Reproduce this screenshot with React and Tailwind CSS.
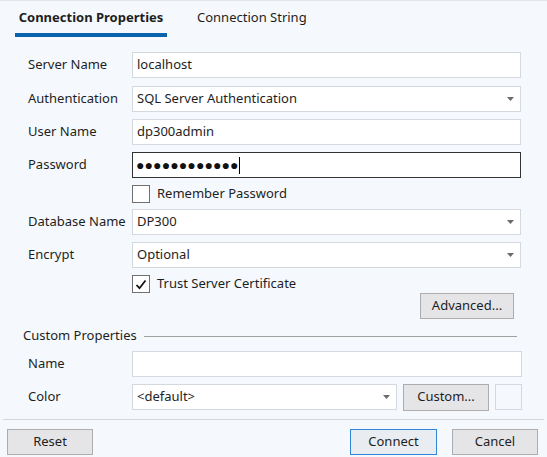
import React from 'react';

const font = { fontFamily: '"Segoe UI", "Noto Sans", "Open Sans", sans-serif' };

function Arrow() {
  return (
    <svg width="7" height="4" viewBox="0 0 7 4" className="shrink-0">
      <path d="M0 0h7L3.5 4z" fill="#6b6b6b" />
    </svg>
  );
}

function Field({ label, children }) {
  return (
    <div className="flex items-center h-[26px]">
      <div className="w-[104px] shrink-0 text-[13px] text-[#1e1e1e]">{label}</div>
      {children}
    </div>
  );
}

function TextBox({ value }) {
  return (
    <div className="flex-1 h-full bg-white border border-[#d4d9e0] px-[4px] flex items-center text-[13px] text-[#1e1e1e]">
      {value}
    </div>
  );
}

function DropDown({ value, className = 'flex-1' }) {
  return (
    <div className={`${className} h-full bg-white border border-[#d4d9e0] pl-[4px] pr-[6px] flex items-center justify-between text-[13px] text-[#1e1e1e]`}>
      <span>{value}</span>
      <Arrow />
    </div>
  );
}

function CheckRow({ checked, label }) {
  return (
    <div className="flex items-center h-[18px] pl-[104px] gap-[7px]">
      <div className="w-[18px] h-[18px] bg-white border border-[#707070] flex items-center justify-center">
        {checked && (
          <svg width="12" height="11" viewBox="0 0 12 11">
            <path d="M1.5 6 L4.5 9.2 L10.5 1.5" fill="none" stroke="#111" strokeWidth="1.8" />
          </svg>
        )}
      </div>
      <span className="text-[13px] text-[#1e1e1e]">{label}</span>
    </div>
  );
}

function Btn({ children, className = '', primary }) {
  return (
    <div
      className={`h-[26px] flex items-center justify-center text-[13px] text-[#1e1e1e] border ${
        primary ? 'border-[#2f86d6] bg-[#e9edf2]' : 'border-[#adadad] bg-[#e5e5e8]'
      } ${className}`}
    >
      {children}
    </div>
  );
}

export default function App() {
  return (
    <div className="w-[547px] h-[457px] bg-[#f5f9fd] border-t border-[#e2e6ea] flex flex-col overflow-hidden" style={font}>
      {/* tabs */}
      <div className="flex items-end pl-[15px] h-[36px]">
        <div className="w-[152px] h-full flex flex-col items-center justify-end">
          <span className="text-[13px] font-bold text-[#1e1e1e] leading-none mb-[9px]">Connection Properties</span>
          <div className="w-full h-[4px] bg-[#0a64ad]" />
        </div>
        <div className="ml-[30px] h-full flex items-end pb-[13px]">
          <span className="text-[13px] text-[#1e1e1e] leading-none">Connection String</span>
        </div>
      </div>

      {/* form */}
      <div className="flex flex-col pl-[28px] pr-[26px] mt-[15px]">
        <Field label="Server Name"><TextBox value="localhost" /></Field>
        <div className="h-[8px]" />
        <Field label="Authentication"><DropDown value="SQL Server Authentication" /></Field>
        <div className="h-[7px]" />
        <Field label="User Name"><TextBox value="dp300admin" /></Field>
        <div className="h-[7px]" />
        <Field label="Password">
          <div className="flex-1 h-full bg-white border border-[#333] px-[3px] flex items-center text-[#111]">
            <span className="text-[14px] tracking-[0.1px] leading-none">●●●●●●●●●●●●</span>
            <span className="w-px h-[17px] bg-black" />
          </div>
        </Field>
        <div className="h-[7px]" />
        <CheckRow label="Remember Password" />
        <div className="h-[6px]" />
        <Field label="Database Name"><DropDown value="DP300" /></Field>
        <div className="h-[7px]" />
        <Field label="Encrypt"><DropDown value="Optional" /></Field>
        <div className="h-[7px]" />
        <CheckRow checked label="Trust Server Certificate" />
        <div className="flex justify-end pr-[7px]">
          <Btn className="w-[94px]">Advanced...</Btn>
        </div>
      </div>

      {/* custom properties */}
      <div className="flex items-center pl-[23px] pr-[30px] mt-[8px] h-[18px]">
        <span className="text-[13px] text-[#1e1e1e]">Custom Properties</span>
        <div className="flex-1 h-px bg-[#a0a0a0] ml-[7px]" />
      </div>
      <div className="flex flex-col pl-[28px] pr-[25px] mt-[6px]">
        <Field label="Name"><TextBox value="" /></Field>
        <div className="h-[7px]" />
        <Field label="Color">
          <DropDown value="<default>" className="w-[265px]" />
          <Btn className="w-[86px] ml-[6px] h-[27px]">Custom...</Btn>
          <div className="w-[27px] h-[26px] ml-[6px] bg-[#f5f9fd] border border-[#d4d9e0]" />
        </Field>
      </div>

      <div className="mx-[3px] mt-[9px] h-px bg-[#d4d8dc]" />

      <div className="flex items-center mt-[9px] px-[7px]">
        <Btn className="w-[86px]">Reset</Btn>
        <div className="flex-1" />
        <Btn primary className="w-[87px]">Connect</Btn>
        <Btn className="w-[86px] ml-[15px] mr-[2px]">Cancel</Btn>
      </div>
    </div>
  );
}
